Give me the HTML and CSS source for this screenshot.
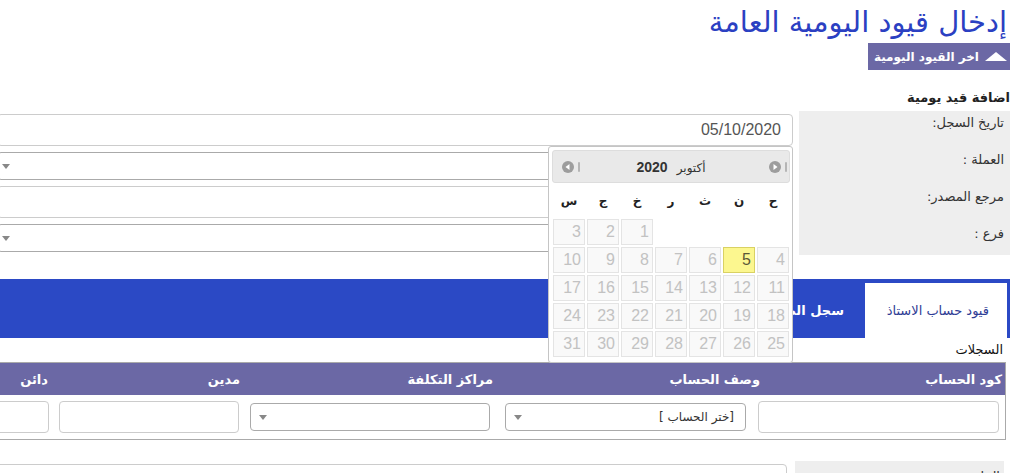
FILE: index.html
```html
<!DOCTYPE html>
<html lang="ar" dir="rtl">
<head>
<meta charset="utf-8">
<title>إدخال قيود اليومية العامة</title>
<link rel="stylesheet" href="styles.css">
</head>
<body>
<div class="page">
  <h1 class="title">إدخال قيود اليومية العامة</h1>
  <div class="toggle-row">
    <div class="toggle">
      <svg class="toggle-icon" width="22" height="9" viewBox="0 0 22 9"><polygon points="11,0 22,9 0,9" fill="#fff"/></svg>
      <span>اخر القيود اليومية</span>
    </div>
  </div>
  <h3 class="section-title">اضافة قيد يومية</h3>

  <div class="form-row">
    <div class="labels">
      <span class="lbl">تاريخ السجل:</span>
      <span class="lbl">العملة :</span>
      <span class="lbl">مرجع المصدر:</span>
      <span class="lbl">فرع :</span>
    </div>
    <div class="fields">
      <div class="input date-input">05/10/2020</div>
      <div class="select"><span class="arrow"></span></div>
      <div class="input"></div>
      <div class="select"><span class="arrow"></span></div>
    </div>
  </div>

  <div class="tabs">
    <div class="tab active">قيود حساب الاستاذ</div>
    <div class="tab">سجل الضريبة</div>
  </div>

  <div class="records-title">السجلات</div>

  <div class="rtable">
    <div class="thead">
      <div class="th th1">كود الحساب</div>
      <div class="th th2">وصف الحساب</div>
      <div class="th th3">مراكز التكلفة</div>
      <div class="th th4">مدين</div>
      <div class="th th5">دائن</div>
    </div>
    <div class="trow">
      <div class="input c1"></div>
      <div class="select c2"><span class="sel-text">[ختر الحساب ]</span><span class="arrow"></span></div>
      <div class="select c3"><span class="arrow"></span></div>
      <div class="input c4"></div>
      <div class="input c5"></div>
    </div>
  </div>

  <div class="form-row form-bottom">
    <div class="labels labels-bottom">
      <span class="lbl">البيان :</span>
    </div>
    <div class="fields fields-bottom">
      <div class="input"></div>
    </div>
  </div>

  <div class="datepicker">
    <div class="dp-header">
      <span class="dp-nav dp-next">
        <span class="sliver"></span>
        <svg width="12" height="12" viewBox="0 0 12 12"><circle cx="6" cy="6" r="6" fill="#9d9d9d"/><polygon points="4.5,3 8.5,6 4.5,9" fill="#fff"/></svg>
      </span>
      <span class="dp-title"><span class="dp-month">أكتوبر</span>&nbsp; <span class="dp-year">2020</span></span>
      <span class="dp-nav dp-prev">
        <span class="sliver"></span>
        <svg width="12" height="12" viewBox="0 0 12 12"><circle cx="6" cy="6" r="6" fill="#9d9d9d"/><polygon points="7.5,3 3.5,6 7.5,9" fill="#fff"/></svg>
      </span>
    </div>
    <div class="dp-days">
      <span>ح</span><span>ن</span><span>ث</span><span>ر</span><span>خ</span><span>ج</span><span>س</span>
    </div>
    <div class="dp-grid">
      <span class="empty"></span><span class="empty"></span><span class="empty"></span><span class="empty"></span>
      <span class="day">1</span><span class="day">2</span><span class="day">3</span>
      <span class="day">4</span><span class="day today">5</span><span class="day">6</span><span class="day">7</span><span class="day">8</span><span class="day">9</span><span class="day">10</span>
      <span class="day">11</span><span class="day">12</span><span class="day">13</span><span class="day">14</span><span class="day">15</span><span class="day">16</span><span class="day">17</span>
      <span class="day">18</span><span class="day">19</span><span class="day">20</span><span class="day">21</span><span class="day">22</span><span class="day">23</span><span class="day">24</span>
      <span class="day">25</span><span class="day">26</span><span class="day">27</span><span class="day">28</span><span class="day">29</span><span class="day">30</span><span class="day">31</span>
    </div>
  </div>
</div>
</body>
</html>
```
FILE: styles.css
```css
html, body {
  margin: 0;
  padding: 0;
  background: #fff;
}
body {
  font-family: "DejaVu Sans", sans-serif;
  color: #333;
}
.page {
  direction: rtl;
  width: 1010px;
  height: 473px;
  margin-right: 20px;
  overflow: hidden;
  position: relative;
}
.title {
  margin: 1px 3px 0 0;
  font-size: 29px;
  line-height: 42px;
  font-weight: normal;
  color: #2b40c2;
  white-space: nowrap;
}
.toggle-row {
  display: flex;
}
.toggle {
  display: flex;
  align-items: center;
  gap: 6px;
  height: 27px;
  padding: 0 7px 0 6px;
  margin-right: -4px;
  background: #6b68a5;
  color: #fff;
  font-weight: bold;
  font-size: 12px;
  white-space: nowrap;
}
.toggle-icon {
  display: block;
}
.section-title {
  margin: 18px 0 3px 0;
  font-size: 13px;
  line-height: 20px;
  font-weight: bold;
  color: #222;
}
.form-row {
  display: flex;
  gap: 6px;
}
.labels {
  flex: 0 0 211px;
  height: 144px;
  box-sizing: border-box;
  background: #eee;
  padding: 2px 6px 0 0;
  display: flex;
  flex-direction: column;
  gap: 17px;
}
.lbl {
  font-size: 13px;
  line-height: 20px;
  color: #333;
  white-space: nowrap;
}
.fields {
  flex: 0 0 796px;
  display: flex;
  flex-direction: column;
  gap: 6px;
  padding-top: 3px;
}
.input {
  height: 32px;
  box-sizing: border-box;
  border: 1px solid #ccc;
  border-radius: 4px;
  background: #fff;
}
.date-input {
  font-family: "Liberation Sans", Arial, sans-serif;
  font-size: 16px;
  line-height: 30px;
  color: #555;
  padding-right: 11px;
}
.select {
  height: 28px;
  box-sizing: border-box;
  border: 1px solid #aaa;
  border-radius: 4px;
  background: #fff;
  display: flex;
  align-items: center;
  justify-content: space-between;
  padding: 0 11px 0 4px;
}
.arrow {
  width: 0;
  height: 0;
  margin-right: auto;
  border-top: 5px solid #888;
  border-left: 4px solid transparent;
  border-right: 4px solid transparent;
}
.tabs {
  margin-top: 24px;
  height: 59px;
  box-sizing: border-box;
  background: #2b49c5;
  display: flex;
  gap: 3px;
  padding: 4px 3px 0 0;
}
.tab {
  display: flex;
  align-items: center;
  padding: 0 18px;
  font-size: 13px;
  color: #fff;
  font-weight: bold;
  white-space: nowrap;
}
.tab.active {
  background: #fff;
  color: #2f3c95;
  font-weight: normal;
  width: 142px;
  box-sizing: border-box;
}
.records-title {
  margin: 2px 7px 0 0;
  font-size: 13px;
  line-height: 20px;
  color: #111;
}
.rtable {
  margin: 2px 4px 0 0;
  width: 1300px;
  border: 1px solid #aaa;
}
.thead {
  display: flex;
  height: 32px;
  align-items: center;
  background: #6b68a5;
  color: #fff;
  font-weight: bold;
  font-size: 13px;
}
.th {
  flex: none;
  white-space: nowrap;
  box-sizing: border-box;
}
.th1 { width: 245px; padding-right: 3px; }
.th2 { width: 267px; }
.th3 { width: 253px; }
.th4 { width: 192px; }
.th5 { width: 300px; }
.trow {
  display: flex;
  align-items: center;
  padding: 6px 6px 6px 0;
}
.trow > div { flex: none; }
.c1 { width: 241px; margin-left: 12px; }
.c2 { width: 241px; margin-left: 15px; padding-left: 8px; }
.c3 { width: 240px; margin-left: 11px; padding-left: 8px; }
.c4 { width: 180px; margin-left: 10px; }
.c5 { width: 300px; }
.sel-text {
  font-size: 12px;
  color: #333;
  white-space: nowrap;
}
.form-bottom {
  margin: 21px 6px 0 0;
  gap: 8px;
}
.labels-bottom {
  flex: 0 0 209px;
  height: 60px;
  padding: 6px 4px 0 0;
}
.fields-bottom {
  padding-top: 3px;
}

/* datepicker overlay */
.datepicker {
  position: absolute;
  left: 548px;
  top: 146px;
  width: 245px;
  height: 217px;
  box-sizing: border-box;
  border: 1px solid #c5c5c5;
  border-radius: 3px;
  background: #fff;
  padding: 3px 3px 5px 3px;
}
.dp-header {
  height: 33px;
  box-sizing: border-box;
  background: #e9e9e9;
  border: 1px solid #dddddd;
  border-radius: 3px;
  display: grid;
  grid-template-columns: 1fr auto 1fr;
  align-items: center;
  margin-right: -1px;
}
.dp-nav {
  display: flex;
  align-items: center;
  gap: 4px;
}
.dp-nav svg { display: block; }
.dp-next {
  justify-self: start;
  margin-right: 2px;
}
.dp-prev {
  justify-self: end;
  margin-left: 9px;
}
.sliver {
  width: 2px;
  height: 10px;
  border-radius: 1px;
  background: #b5b5b5;
}
.dp-title {
  font-weight: bold;
  font-size: 13px;
  color: #333;
  white-space: nowrap;
}
.dp-month {
  font-weight: normal;
  font-size: 12px;
}
.dp-year {
  font-family: "Liberation Sans", Arial, sans-serif;
  font-size: 14px;
}
.dp-days {
  height: 36px;
  display: grid;
  grid-template-columns: repeat(7, 32px);
  column-gap: 2px;
  align-items: center;
  justify-items: center;
  margin-left: 1px;
  font-size: 12px;
  font-weight: bold;
  color: #222;
}
.dp-grid {
  display: grid;
  grid-template-columns: repeat(7, 32px);
  grid-auto-rows: 26px;
  gap: 2px;
  margin-left: 1px;
}
.day {
  box-sizing: border-box;
  border: 1px solid #e4e4e4;
  background: #f9f9f9;
  color: #c2c2c2;
  font-family: "Liberation Sans", Arial, sans-serif;
  font-size: 16px;
  line-height: 24px;
  text-align: right;
  padding-right: 3px;
  direction: ltr;
}
.day.today {
  background: #fcf78f;
  border-color: #d9d163;
  color: #5b5838;
}
```
